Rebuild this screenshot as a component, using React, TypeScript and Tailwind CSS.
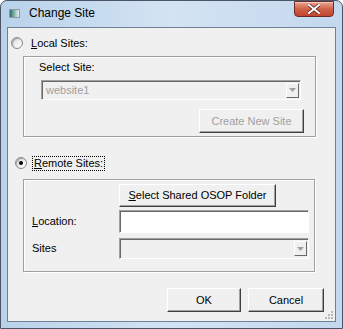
import type { ReactNode } from "react";

// Vista-style "Change Site" dialog, classic controls inside

function Radio({ checked }: { checked?: boolean }) {
  return (
    <span className="flex h-[12px] w-[12px] shrink-0 items-center justify-center rounded-full border border-[#8a8a8a] bg-gradient-to-br from-[#dcdcdc] to-white shadow-[inset_1px_1px_1px_#a8a8a8]">
      {checked && <span className="h-[4px] w-[4px] rounded-full bg-black" />}
    </span>
  );
}

function Button({
  children,
  className = "",
  disabled,
}: {
  children: ReactNode;
  className?: string;
  disabled?: boolean;
}) {
  return (
    <button
      className={`flex shrink-0 items-center justify-center border border-t-white border-l-white border-r-[#404040] border-b-[#404040] bg-[#f0f0f0] text-[11px] leading-[13px] shadow-[inset_-1px_-1px_0_#a0a0a0] ${
        disabled ? "text-[#a0a0a0]" : "text-black"
      } ${className}`}
    >
      {children}
    </button>
  );
}

function Combo({ value, className = "" }: { value?: string; className?: string }) {
  return (
    <div
      className={`flex shrink-0 items-center border border-t-[#a0a0a0] border-l-[#a0a0a0] border-r-white border-b-white bg-[#f0f0f0] shadow-[inset_1px_1px_0_#696969] ${className}`}
    >
      <span className="flex-1 pl-[4px] pt-[1px] text-[11px] leading-[13px] text-[#a0a0a0]">{value}</span>
      <span className="mr-[1px] flex h-[15px] w-[13px] items-center justify-center border border-t-white border-l-white border-r-[#696969] border-b-[#696969] bg-[#f0f0f0]">
        <svg width="7" height="4" viewBox="0 0 7 4">
          <path d="M0 0h7L3.5 4z" fill="#a0a0a0" />
        </svg>
      </span>
    </div>
  );
}

export default function App() {
  return (
    <div className="flex h-[329px] w-[343px] flex-col overflow-hidden rounded-t-[7px] border border-[#4a5665] bg-gradient-to-r from-[#b9d2ea] via-[#d3e3f3] to-[#c3d8ee] font-['Liberation_Sans',Arial,sans-serif]">
      {/* title bar */}
      <div className="flex h-[26px] shrink-0 items-start">
        <div className="ml-[8px] mt-[8px] flex h-[9px] w-[11px] border border-[#8a9aa8] bg-gradient-to-r from-[#2f6a6a] via-[#8ab8a8] to-[#e8eef2]" />
        <span className="ml-[9px] mt-[5px] text-[12px] leading-[15px] text-black">Change Site</span>
        <div className="ml-auto mr-[8px] flex h-[16px] w-[40px] items-center justify-center rounded-b-[4px] border border-[#6b2a22] bg-gradient-to-b from-[#e8a595] via-[#d0614a] to-[#c04530] shadow-[inset_0_1px_0_#f4c8bc]">
          <svg width="12" height="10" viewBox="0 0 12 10">
            <path
              d="M1 1l10 8M11 1L1 9"
              stroke="#5a1a12"
              strokeWidth="3.4"
              strokeLinecap="square"
            />
            <path
              d="M1 1l10 8M11 1L1 9"
              stroke="#ffffff"
              strokeWidth="2"
              strokeLinecap="square"
            />
          </svg>
        </div>
      </div>

      {/* client area */}
      <div className="flex flex-1 px-[6px]">
        <div className="relative flex h-[295px] flex-1 flex-col border border-[#6f8196] bg-[#f0f0f0] text-[11px] leading-[13px] text-black">
          {/* local sites */}
          <div className="ml-[3px] mt-[9px] flex h-[12px] items-center gap-[8px]">
            <Radio />
            <span>
              <u>L</u>ocal Sites:
            </span>
          </div>
          <div className="ml-[15px] mt-[7px] flex h-[81px] w-[293px] shrink-0 flex-col border border-[#a0a0a0] shadow-[1px_1px_0_#fff,inset_1px_1px_0_#fff]">
            <span className="ml-[15px] mt-[4px]">Select Site:</span>
            <Combo value="website1" className="ml-[17px] mt-[6px] h-[20px] w-[260px]" />
            <Button disabled className="ml-[175px] mt-[9px] h-[24px] w-[105px]">
              Create New Site
            </Button>
          </div>

          {/* remote sites */}
          <div className="ml-[7px] mt-[18px] flex h-[16px] items-center gap-[5px]">
            <Radio checked />
            <span className="border border-dotted border-black px-[1px]">
              <u>R</u>emote Sites:
            </span>
          </div>
          <div className="ml-[15px] mt-[8px] flex h-[93px] w-[292px] shrink-0 flex-col border border-[#a0a0a0] shadow-[1px_1px_0_#fff,inset_1px_1px_0_#fff]">
            <Button className="ml-[95px] mt-[4px] h-[23px] w-[157px]">
              <span>
                <u>S</u>elect Shared OSOP Folder
              </span>
            </Button>
            <div className="mt-[3px] flex items-center">
              <span className="ml-[8px] w-[87px]">
                <u>L</u>ocation:
              </span>
              <div className="h-[23px] w-[190px] border border-t-[#a0a0a0] border-l-[#a0a0a0] border-r-white border-b-white bg-white shadow-[inset_1px_1px_0_#696969]" />
            </div>
            <div className="mt-[5px] flex items-center">
              <span className="ml-[8px] w-[87px]">Sites</span>
              <Combo className="h-[21px] w-[190px]" />
            </div>
          </div>

          {/* dialog buttons */}
          <div className="ml-[159px] mt-[16px] flex gap-[7px]">
            <Button className="h-[24px] w-[74px] border-t-[#404040] border-l-[#404040] shadow-[inset_-1px_-1px_0_#a0a0a0,inset_1px_1px_0_#fff]">
              OK
            </Button>
            <Button className="h-[24px] w-[76px]">Cancel</Button>
          </div>

          {/* size grip */}
          <div className="absolute bottom-[2px] right-[2px] grid grid-cols-3 gap-[1px]">
            {[0, 0, 1, 0, 1, 1, 1, 1, 1].map((on, i) => (
              <span
                key={i}
                className={`h-[2px] w-[2px] ${on ? "bg-[#b8b8b8]" : "bg-transparent"}`}
              />
            ))}
          </div>
        </div>
      </div>
      <div className="h-[7px] shrink-0" />
    </div>
  );
}
